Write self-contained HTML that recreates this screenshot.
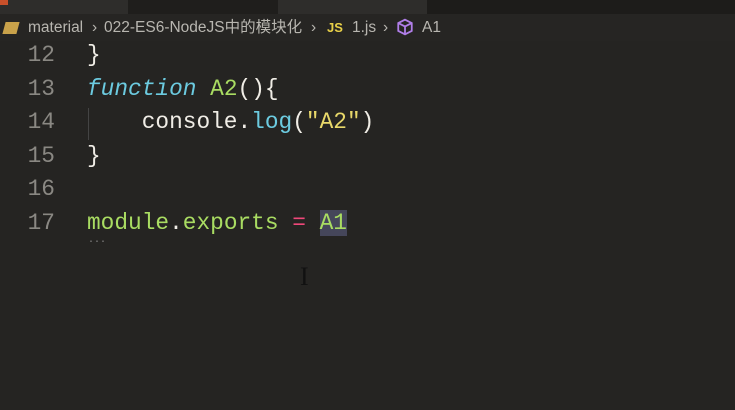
<!DOCTYPE html>
<html><head><style>
body{margin:0;width:735px;height:410px;background:#252422;overflow:hidden;position:relative;font-family:"Liberation Mono",monospace}
.tabs{position:absolute;top:0;left:0;width:735px;height:14px;background:#1d1c1a}
.tab{position:absolute;top:0;height:14px}
.bc{position:absolute;top:14px;left:0;width:735px;height:27px;background:#262523;font-family:"Liberation Sans","Noto Sans CJK SC",sans-serif;font-size:15.5px;color:#b8b6b0;line-height:27px;white-space:nowrap}
.bc span{position:absolute;top:0}
.ln{position:absolute;left:0;width:55px;text-align:right;color:#8a8883;font-size:22.8px}
.cd{position:absolute;left:87px;color:#f0ede6;font-size:22.8px;white-space:pre}
.g{color:#a9dc62}.b{color:#6ccbe0}.y{color:#e8d86a}.p{color:#f0487a}
</style></head><body>
<div class="tabs">
<div class="tab" style="left:0;width:128px;background:#2e2d2b"></div>
<div class="tab" style="left:128px;width:150px;background:#1f1e1c"></div>
<div class="tab" style="left:278px;width:149px;background:#2e2d2b"></div>
<div style="position:absolute;left:0;top:0;width:8px;height:5px;background:#c8502a"></div>
</div>
<div class="bc">
<span style="left:4px;top:8px;width:14px;height:12px;background:#c9a24a;transform:skewX(-15deg)"></span>
<span style="left:28px">material</span>
<span style="left:92px">›</span>
<span style="left:104px">022-ES6-NodeJS中的模块化</span>
<span style="left:311px">›</span>
<span style="left:327px;color:#e8d048;font-weight:bold;font-size:13px">JS</span>
<span style="left:352px">1.js</span>
<span style="left:383px">›</span>
<span style="left:396px;top:4px"><svg width="18" height="18" viewBox="0 0 16 16"><path d="M8 1.5L14 4.5V11.5L8 14.5L2 11.5V4.5Z M2 4.5L8 7.5L14 4.5 M8 7.5V14.5" fill="none" stroke="#b07ee8" stroke-width="1.6"/></svg></span>
<span style="left:422px">A1</span>
</div>
<div class="ln" style="top:42px">12</div><div class="cd" style="top:42px">}</div>
<div class="ln" style="top:76px">13</div><div class="cd" style="top:76px"><i class="b">function</i> <span class="g">A2</span>(){</div>
<div style="position:absolute;left:88px;top:108px;width:1px;height:32px;background:#444"></div>
<div class="ln" style="top:109px">14</div><div class="cd" style="top:109px">    console.<span class="b">log</span>(<span class="y">"A2"</span>)</div>
<div class="ln" style="top:143px">15</div><div class="cd" style="top:143px">}</div>
<div class="ln" style="top:176px">16</div>
<div class="ln" style="top:210px">17</div><div class="cd" style="top:210px"><span class="g">module</span>.<span class="g">exports</span> <span class="p">=</span> <span class="g" style="background:#45465a">A1</span></div>
<div style="position:absolute;left:88px;top:237px;color:#888;font-size:10px">···</div>
<div style="position:absolute;left:300px;top:262px;color:#111;font-size:26px;font-family:'Liberation Serif',serif">I</div>
</body></html>
